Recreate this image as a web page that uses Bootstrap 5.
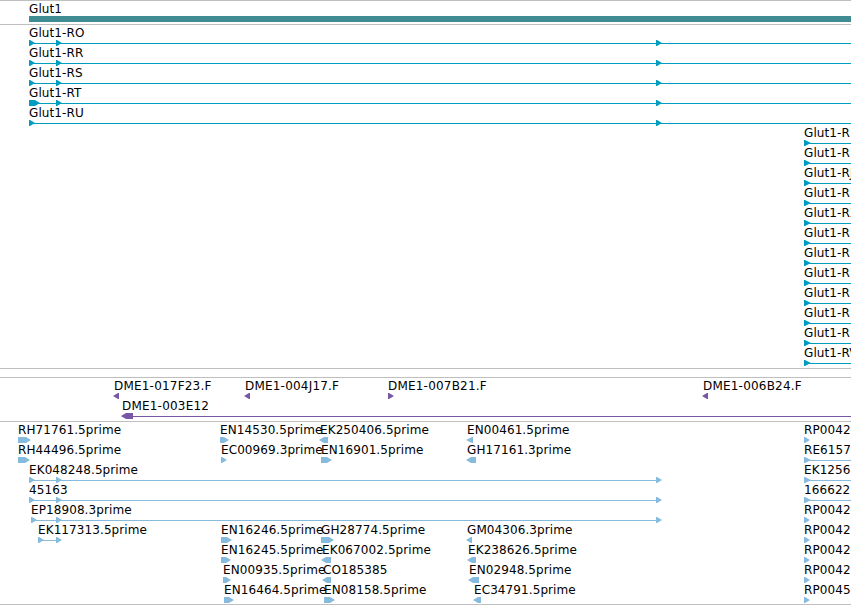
<!DOCTYPE html>
<html lang="en">
<head>
  <meta charset="UTF-8" />
  <meta name="viewport" content="width=device-width, initial-scale=1.0"/>
  <title>Glut1 | Genome Browser</title>
  <link href="https://cdn.jsdelivr.net/npm/bootstrap@5.3.0/dist/css/bootstrap.min.css" rel="stylesheet">
  <style>
    body {
      font-family: "DejaVu Sans", sans-serif;
      font-size: 12px;
      line-height: 14px;
      letter-spacing: 0.09px;
      color: #000;
    }
    .track {
      border-top: 1px solid #bfbfbf;
      padding-bottom: 3px;
    }
    .track-end {
      border-bottom: 1px solid #bfbfbf;
    }
    .track-gap {
      margin-bottom: 8px;
    }
    .track-last {
      padding-bottom: 2px;
    }
    .lane {
      height: 20px;
    }
    .feature-label {
      top: 1px;
      white-space: nowrap;
    }
    .feature-label-bac {
      letter-spacing: 0.2px;
    }
    .glyphs {
      top: 15px;
      left: 0;
      height: 6px;
    }
    .gene { fill: #408c92; }
    .transcript { fill: #009dc0; }
    .bac { fill: #7858a6; }
    .est { fill: #87bbde; }
  </style>
</head>
<body class="bg-white overflow-hidden">

<main>
  <section class="track" id="gene"></section>
  <section class="track track-end track-gap" id="transcript"></section>
  <section class="track" id="bac"></section>
  <section class="track track-end track-last" id="est"></section>
</main>

<script>
  const END = 851;

  // feature: [name, strand, blocks as [start, end], line end (optional)]
  const rightEnd = name => [[name, 1, [[804, 811]], END]];

  const tracks = {
    gene: [
      [["Glut1", 0, [[29, END]]]]
    ],
    transcript: [
      [["Glut1-RO", 1, [[29, 35], [56, 62], [656, 662]], END]],
      [["Glut1-RR", 1, [[29, 35], [56, 62], [656, 662]], END]],
      [["Glut1-RS", 1, [[29, 35], [56, 62], [656, 662]], END]],
      [["Glut1-RT", 1, [[29, 40], [56, 62], [656, 662]], END]],
      [["Glut1-RU", 1, [[29, 35], [656, 662]], END]],
      rightEnd("Glut1-R"),
      rightEnd("Glut1-R"),
      rightEnd("Glut1-RJ"),
      rightEnd("Glut1-R"),
      rightEnd("Glut1-RX"),
      rightEnd("Glut1-R"),
      rightEnd("Glut1-R"),
      rightEnd("Glut1-R"),
      rightEnd("Glut1-R"),
      rightEnd("Glut1-R"),
      rightEnd("Glut1-R"),
      rightEnd("Glut1-RV")
    ],
    bac: [
      [
        ["DME1-017F23.F", -1, [[113, 119]]],
        ["DME1-004J17.F", -1, [[244, 250]]],
        ["DME1-007B21.F", 1, [[388, 394]]],
        ["DME1-006B24.F", -1, [[702, 708]]]
      ],
      [["DME1-003E12", -1, [[121, 133]], END]]
    ],
    est: [
      [
        ["RH71761.5prime", 1, [[18, 31]]],
        ["EN14530.5prime", 1, [[220, 229]]],
        ["EK250406.5prime", -1, [[319, 328]]],
        ["EN00461.5prime", -1, [[466, 473]]],
        ["RP0042", 1, [[804, 810]]]
      ],
      [
        ["RH44496.5prime", 1, [[18, 30]]],
        ["EC00969.3prime", 1, [[221, 227]]],
        ["EN16901.5prime", 1, [[321, 332]]],
        ["GH17161.3prime", -1, [[466, 476]]],
        ["RE6157", 1, [[804, 811]], END]
      ],
      [
        ["EK048248.5prime", 1, [[29, 35], [56, 62], [656, 662]], 660],
        ["EK1256", 1, [[804, 811]], END]
      ],
      [
        ["45163", 1, [[29, 35], [56, 62], [656, 662]], 660],
        ["166622", 1, [[804, 811]], END]
      ],
      [
        ["EP18908.3prime", 1, [[31, 37], [56, 62], [656, 662]], 660],
        ["RP0042", 1, [[804, 810]]]
      ],
      [
        ["EK117313.5prime", 1, [[38, 44], [56, 62]], 60],
        ["EN16246.5prime", 1, [[221, 232]]],
        ["GH28774.5prime", 1, [[321, 334]]],
        ["GM04306.3prime", -1, [[466, 472]]],
        ["RP0042", 1, [[804, 810]]]
      ],
      [
        ["EN16245.5prime", 1, [[221, 231]]],
        ["EK067002.5prime", -1, [[321, 331]]],
        ["EK238626.5prime", -1, [[467, 476]]],
        ["RP0042", 1, [[804, 810]]]
      ],
      [
        ["EN00935.5prime", 1, [[223, 231]]],
        ["CO185385", -1, [[322, 331]]],
        ["EN02948.5prime", -1, [[468, 479]]],
        ["RP0042", 1, [[804, 810]]]
      ],
      [
        ["EN16464.5prime", 1, [[224, 234]]],
        ["EN08158.5prime", 1, [[324, 335]]],
        ["EC34791.5prime", -1, [[473, 481]]],
        ["RP0045", 1, [[804, 810]]]
      ]
    ]
  };

  // box with a pointed end on the side of the strand
  function block(start, end, strand) {
    const width = end - start;
    const tip = width > 7 ? 5 : width - 1;
    if (strand > 0) {
      return `<polygon points="${start},0 ${end - tip},0 ${end},3 ${end - tip},6 ${start},6"/>`;
    }
    if (strand < 0) {
      return `<polygon points="${end},0 ${start + tip},0 ${start},3 ${start + tip},6 ${end},6"/>`;
    }
    return `<rect x="${start}" width="${width}" height="6"/>`;
  }

  Object.keys(tracks).forEach(id => {
    const track = document.getElementById(id);
    tracks[id].forEach(features => {
      let labels = "";
      let shapes = "";
      features.forEach(([name, strand, blocks, lineEnd]) => {
        const start = strand < 0 ? blocks[0][0] + 1 : blocks[0][0];
        labels += `<span class="feature-label feature-label-${id} position-absolute" style="left: ${start}px">${name}</span>`;
        if (lineEnd) {
          shapes += `<rect x="${start}" y="3" width="${lineEnd - start}" height="1"/>`;
        }
        shapes += blocks.map(b => block(b[0], b[1], strand)).join("");
      });

      const lane = document.createElement("div");
      lane.className = "lane position-relative";
      lane.innerHTML = `${labels}<svg class="glyphs ${id} position-absolute w-100">${shapes}</svg>`;
      track.appendChild(lane);
    });
  });
</script>

<script src="https://cdn.jsdelivr.net/npm/bootstrap@5.3.0/dist/js/bootstrap.bundle.min.js"></script>
</body>
</html>
